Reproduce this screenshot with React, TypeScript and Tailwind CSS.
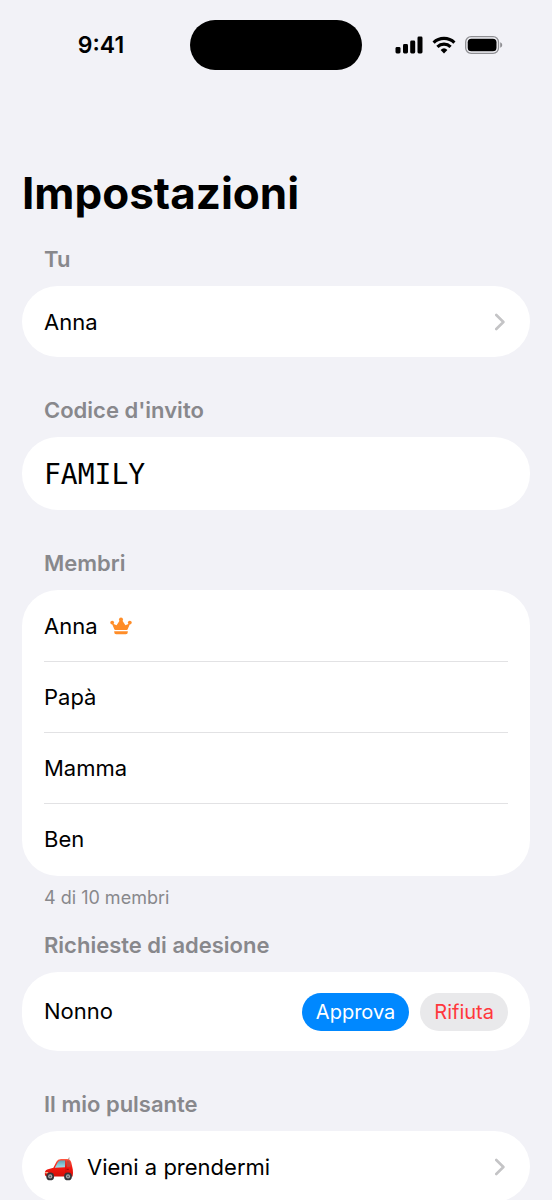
import React from 'react'

const members = [
  { name: 'Anna', admin: true },
  { name: 'Papà', admin: false },
  { name: 'Mamma', admin: false },
  { name: 'Ben', admin: false },
]

const SignalIcon = () => (
  <svg width="28" height="18" viewBox="0 0 28 18" aria-hidden="true">
    <rect x="0.5" y="11" width="5" height="6.5" rx="1.4" />
    <rect x="8" y="8" width="5" height="9.5" rx="1.4" />
    <rect x="15.2" y="4.5" width="5" height="13" rx="1.4" />
    <rect x="22.5" y="0.5" width="5" height="17" rx="1.4" />
  </svg>
)

const WifiIcon = () => (
  <svg width="24" height="18" viewBox="0 0 24 18" fill="none" stroke="#000" strokeWidth="3.2" aria-hidden="true">
    <path d="M1.6 6.6a15 15 0 0 1 20.8 0" />
    <path d="M5.4 10.8a9.6 9.6 0 0 1 13.2 0" />
    <path d="M12 17.4l-3.4-3.5a5 5 0 0 1 6.8 0z" fill="#000" stroke="none" />
  </svg>
)

const BatteryIcon = () => (
  <svg width="38" height="18" viewBox="0 0 38 18" aria-hidden="true">
    <rect x="0.7" y="0.7" width="32.8" height="16.6" rx="5.4" fill="none" stroke="#8f8f93" strokeWidth="1.3" />
    <rect x="2.7" y="2.7" width="28.8" height="12.6" rx="3.6" />
    <path d="M35.2 6.2c1.2.4 2 1.5 2 2.8s-.8 2.4-2 2.8z" fill="#8f8f93" />
  </svg>
)

const Chevron = () => (
  <svg className="mr-[3px]" width="10" height="18" viewBox="0 0 10 18" fill="none" aria-hidden="true">
    <path d="M1.3 2L8.4 9l-7.1 7" stroke="#c4c4c6" strokeWidth="2.6" strokeLinecap="round" strokeLinejoin="round" />
  </svg>
)

const Crown = () => (
  <svg width="22" height="18" viewBox="0 0 22 18" fill="#ff8d28" role="img" aria-label="Admin">
    <path d="M4.2 12L1.8 6.2 6.600 8.200 10 3h2l3.400 5.200 4.800-2L17.800 12q-.2 1-1.200 1H5.400q-1 0-1.200-1z" />
    <circle cx="11" cy="2.4" r="2" />
    <circle cx="2.2" cy="5.6" r="1.9" />
    <circle cx="19.8" cy="5.6" r="1.9" />
    <path d="M4.2 14.3h13.6v.7q0 2.2-2 2.2H6.2q-2 0-2-2.2z" />
  </svg>
)

const Car = () => (
  <svg width="30" height="27" viewBox="0 -3 30 27" role="img" aria-label="Auto">
    <defs>
      <linearGradient id="car-body" x1="0" y1="0" x2="0" y2="1">
        <stop offset="0" stopColor="#ff5a43" />
        <stop offset="0.5" stopColor="#f3170f" />
        <stop offset="1" stopColor="#d50d08" />
      </linearGradient>
      <linearGradient id="car-glass" x1="0" y1="0" x2="0" y2="1">
        <stop offset="0" stopColor="#5fa3b4" />
        <stop offset="1" stopColor="#a5e0ea" />
      </linearGradient>
    </defs>
    <path d="M24.4 3.2L25.2.6" stroke="#777" strokeWidth="0.8" />
    <path d="M.9 17.6c-.3-2.6.4-4.6 2.3-5.2l6.2-1.6 3-6Q13.6 2.2 17 2h6q3.4 0 4.300 3.400l1.500 7q.5 3.500-.2 7.200H3Q1 19.600.9 17.600z" fill="url(#car-body)" />
    <path d="M10.8 10.8l2.9-5.4q1-1.900 3-2h4.600l-.3 6.800z" fill="url(#car-glass)" />
    <path d="M23 3.600h1q1.600.2 2 1.800l.8 4.200-3.800.4z" fill="#c2473c" />
    <path d="M21.800 3.400v15" stroke="#c50f0a" strokeWidth="0.6" />
    <path d="M1.200 15.600l3 .2" stroke="#ffc89a" strokeWidth="1.2" />
    <path d="M22.600 12.300h2.200" stroke="#8e0b08" strokeWidth="0.9" />
    <circle cx="6.2" cy="19.4" r="3.900" fill="#35353a" />
    <circle cx="6.2" cy="19.4" r="2.1" fill="#a9a9ad" />
    <circle cx="6.2" cy="19.4" r="0.9" fill="#55555a" />
    <circle cx="24" cy="19.4" r="3.900" fill="#35353a" />
    <circle cx="24" cy="19.4" r="2.1" fill="#a9a9ad" />
    <circle cx="24" cy="19.4" r="0.9" fill="#55555a" />
  </svg>
)

const StatusBar = () => (
  <div className="grid h-[90px] grid-cols-[1fr_172px_1fr] items-center">
    <div className="pl-3 text-center text-[23px] font-semibold">9:41</div>
    <div className="h-[50px] rounded-full bg-black" />
    <div className="flex items-center justify-center gap-[9px] pr-4">
      <SignalIcon />
      <WifiIcon />
      <BatteryIcon />
    </div>
  </div>
)

type SectionProps = { title: string; footer?: string; children: React.ReactNode }

const Section = ({ title, footer, children }: SectionProps) => (
  <section>
    <h2 className="mb-[13px] px-[22px] text-[22px] leading-7 font-semibold text-[#88888c]">{title}</h2>
    <div className="overflow-hidden rounded-[36px] bg-white">{children}</div>
    {footer && <p className="mt-[10px] px-[22px] text-[18px] leading-6 text-[#88888c]">{footer}</p>}
  </section>
)

export default function App() {
  return (
    <div className="h-screen overflow-hidden bg-[#f2f2f7] font-['Inter',sans-serif] text-black">
      <StatusBar />
      <main className="px-[22px] pt-[75px]">
        <h1 className="mb-6 text-[44px] leading-[56px] font-bold">Impostazioni</h1>

        <div className="flex flex-col gap-[39px]">
          <Section title="Tu">
            <button className="flex h-[71px] w-full items-center justify-between px-[22px] pt-px text-[22px]">
              Anna
              <Chevron />
            </button>
          </Section>

          <Section title="Codice d'invito">
            <p className="flex h-[73px] items-center px-[22px] pt-0.5 font-['DejaVu_Sans_Mono',monospace] text-[28px]">FAMILY</p>
          </Section>

          <div className="flex flex-col gap-[21px]">
            <Section title="Membri" footer="4 di 10 membri">
              <ul className="divide-y divide-[#e2e2e4] px-[22px] pt-px pb-0.5 text-[22px]">
                {members.map((m) => (
                  <li key={m.name} className="box-content flex h-[70px] items-center gap-3">
                    {m.name}
                    {m.admin && <Crown />}
                  </li>
                ))}
              </ul>
            </Section>

            <Section title="Richieste di adesione">
              <div className="flex h-[79px] items-center gap-[11px] px-[22px] text-[22px]">
                <span className="flex-1">Nonno</span>
                <button className="h-[38px] rounded-full bg-[#0088ff] px-[14px] text-[20px] text-white">Approva</button>
                <button className="h-[38px] rounded-full bg-[#e9e9eb] px-[14px] text-[20px] text-[#ff383c]">Rifiuta</button>
              </div>
            </Section>
          </div>

          <Section title="Il mio pulsante">
            <button className="flex h-[71px] w-full items-center gap-[13px] px-[22px] pt-px text-left text-[22px]">
              <Car />
              <span className="flex-1">Vieni a prendermi</span>
              <Chevron />
            </button>
          </Section>
        </div>
      </main>
    </div>
  )
}
